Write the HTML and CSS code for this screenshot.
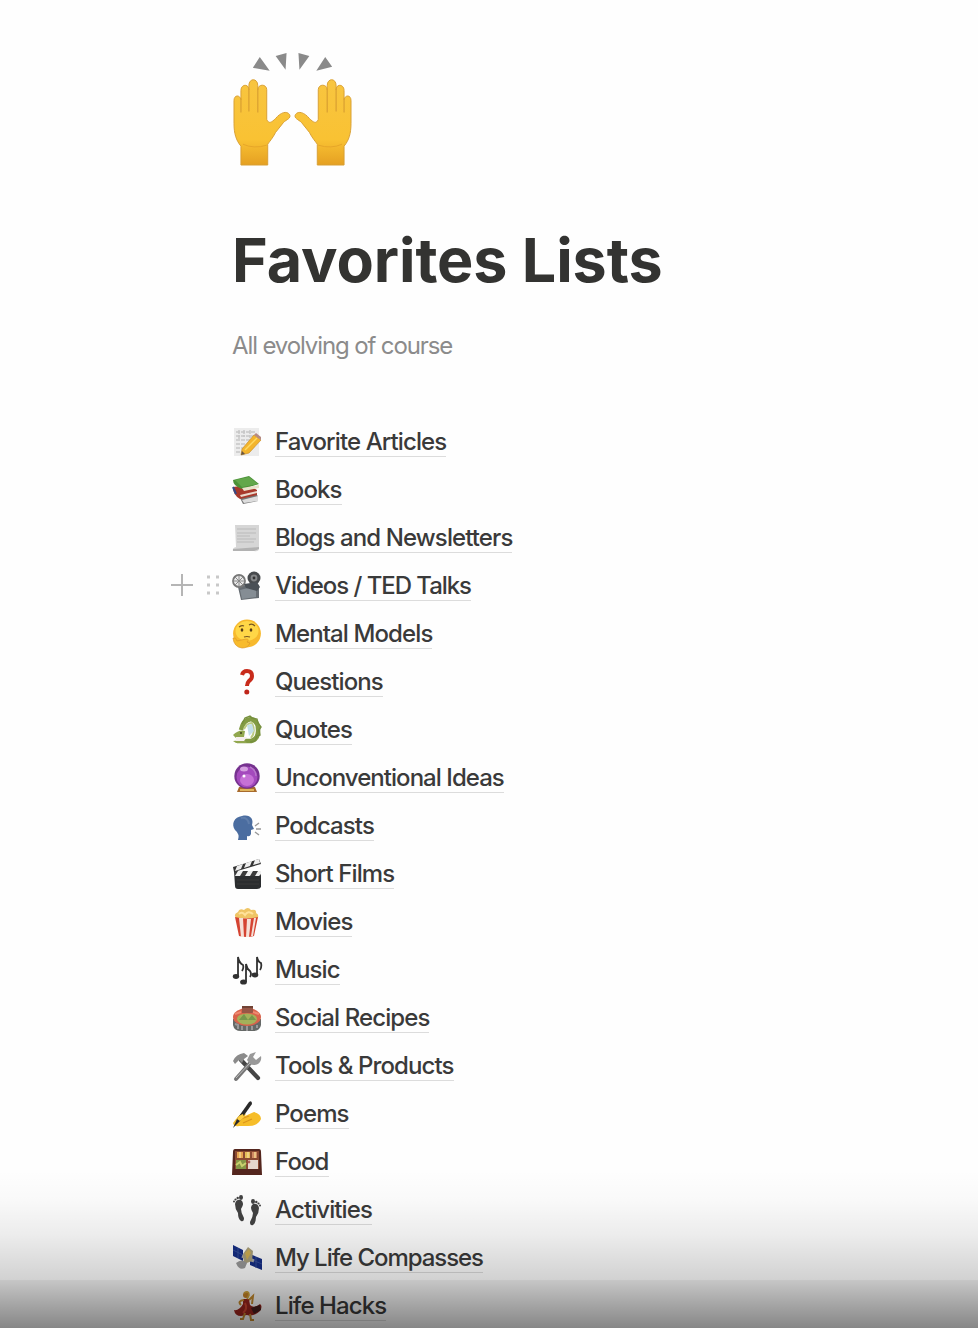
FILE: index.html
```html
<!DOCTYPE html>
<html lang="en">
<head>
<meta charset="utf-8">
<title>Favorites Lists</title>
<link rel="stylesheet" href="styles.css">
</head>
<body>
<main class="page">
<svg class="hero" viewBox="0 0 120 118">
<defs>
<linearGradient id="skin" x1="0" x2="0" y1="0" y2="1"><stop offset="0" stop-color="#f8c540"/><stop offset=".7" stop-color="#f9c233"/><stop offset="1" stop-color="#e5a022"/></linearGradient>
<g id="hand"><path d="M8 116V97C3 91 1 84 1 74V51C1 45 7 45 8 50V41C8 34 16 34 16 40V36C16 28 25 28 25 36V40C25 34 34 34 34 40V70C36 75 39 73 43 69C48 63 54 61 57 65C59 69 54 70 51 73L43 83C40 89 37 92 35 95V116Z" fill="url(#skin)" stroke="#d9a035"/><path d="M8 49V63M16 39V62M25 39V63" fill="none" stroke="#dba232" stroke-width="1.3"/><path d="M10 95Q21 100 34 96" fill="none" stroke="#e6a628"/></g>
</defs>
<g fill="#8a8a8a"><path d="M27 7 20 18 37 21ZM43 6 54 3 53 20ZM66 3 77 6 67 20ZM93 7 100 17 84 21Z"/></g>
<use href="#hand"/><use href="#hand" transform="matrix(-1 0 0 1 120 0)"/>
</svg>
<h1 class="title">Favorites Lists</h1>
<p class="subtitle">All evolving of course</p>
<ul class="list">
<li class="row"><svg class="icon" viewBox="0 0 30 30"><path d="M2 1H27V29H2Z" fill="#ececec"/><path d="M4 5H24M4 9H22M4 13H18M4 17H14M4 21H12M4 25H10M7 3V12M12 3V10M18 3V11" stroke="#c6c6c6" stroke-width="1.4" stroke-dasharray="4 1"/><path d="M10 22 22 8 29 13 17 26 9 28Z" fill="#f3b52c" stroke="#c98e2c" stroke-width=".7"/><path d="M13 23 25 11" stroke="#ffda63" stroke-width="1.5"/><path d="M22 8 24 6 29 10 29 13Z" fill="#b58a83"/><path d="M9 28 10 24 13 27Z" fill="#675545"/></svg><a class="link">Favorite Articles</a></li>
<li class="row"><svg class="icon" viewBox="0 0 30 30"><path d="M6 19 20 16 26 21V26L11 29Z" fill="#777"/><path d="M10 25 26 21V26L12 28Z" fill="#ddd"/><path d="M1 12 16 10 25 15V20L8 24Q1 20 1 12Z" fill="#a8392c"/><path d="M8 20 25 16V18L9 22Z" fill="#ead8cc"/><path d="M1 5 17 1 27 9 10 14Q1 11 1 5Z" fill="#4b9138"/><path d="M3 5 17 2 26 9 10 12Z" fill="#62a74a"/><path d="M10 13 27 10V13L12 16Z" fill="#e7e2c9"/><path d="M1 12 4 19" stroke="#354a87" stroke-width="2"/></svg><a class="link">Books</a></li>
<li class="row"><svg class="icon" viewBox="0 0 30 30"><path d="M3 2H27V25Q27 29 22 28H1Q0 25 4 24Z" fill="#d6d6d6"/><path d="M5 6H24M5 10H24M5 13H18M5 16H24M5 19H22" stroke="#c4c4c4" stroke-width="1.3"/><path d="M1 26 27 24V26L22 28H1Z" fill="#b2b2b2"/></svg><a class="link">Blogs and Newsletters</a></li>
<li class="row"><span class="handles"><svg class="plus" viewBox="0 0 22 22"><path d="M11 0V22M0 11H22" stroke="#b5b5b5" stroke-width="2"/></svg><svg class="drag" viewBox="0 0 14 22"><path d="M1 3H4M10 3H13M1 11H4M10 11H13M1 19H4M10 19H13" stroke="#c8c8c8" stroke-width="3"/></svg></span><svg class="icon" viewBox="0 0 30 30"><path d="M6 16 24 11 27 15V27L9 29Z" fill="#666c72"/><path d="M8 19 24 15V26L10 28Z" fill="#858d94"/><circle cx="7" cy="10" r="6" fill="#e9e9e9" stroke="#777" stroke-width="1.8"/><path d="M7 4V16M1 10H13M3 6 11 14M3 14 11 6" stroke="#888"/><circle cx="22" cy="7" r="6.5" fill="#484b4e"/><circle cx="22" cy="7" r="3.4" fill="#858789"/><circle cx="22" cy="7" r="1.4" fill="#333"/><path d="M12 13 25 11 28 16 25 20 14 17Z" fill="#4a5056"/></svg><a class="link tight">Videos / TED Talks</a></li>
<li class="row"><svg class="icon" viewBox="0 0 30 30"><circle cx="15" cy="14.5" r="13.9" fill="#f7b92d"/><ellipse cx="15" cy="12" rx="11.5" ry="10" fill="#ffd747"/><ellipse cx="10" cy="11" rx="1.3" ry="1.8" fill="#573c16"/><ellipse cx="19" cy="11" rx="1.3" ry="1.8" fill="#573c16"/><path d="M7 8Q10 6 12 7M17 6Q20 4 23 7M12 18Q15 17 18 18" fill="none" stroke="#785620" stroke-width="1.2"/><path d="M1 19Q4 18 5 22L14 20Q18 20 15 23L18 24Q16 29 10 29Q2 28 1 19Z" fill="#f8bb2c" stroke="#dc9826" stroke-width=".7"/></svg><a class="link">Mental Models</a></li>
<li class="row"><svg class="icon" viewBox="0 0 30 30"><path d="M10 8Q11 4 15 4Q20 4 20 9Q20 12 17 14Q15 16 15 19" fill="none" stroke="#c82b1b" stroke-width="4"/><circle cx="14.8" cy="25" r="2.5" fill="#bf261b"/></svg><a class="link">Questions</a></li>
<li class="row"><svg class="icon" viewBox="0 0 30 30"><path d="M9 15Q11 5 19 4Q26 6 26 14Q27 24 19 26H5" fill="none" stroke="#829b43" stroke-width="4.5"/><path d="M10 9 13 3 18 1 20 3 25 4 26 8 29 12 27 15 28 20 25 21 23 26 18 27" fill="none" stroke="#758f3d" stroke-width="1.4"/><path d="M12 14Q15 8 20 8Q24 17 19 23" fill="none" stroke="#bccb83" stroke-width="2"/><path d="M1 20Q7 14 13 16L12 22 4 23ZM1 26 12 25 15 28H4Z" fill="#91a74e"/><path d="M4 22H15L12 26H4Z" fill="#f5eeee"/><path d="M15 10 20 9 22 16 17 21Z" fill="#c4e0e9"/><circle cx="9" cy="18" r="1" fill="#404020"/></svg><a class="link">Quotes</a></li>
<li class="row"><svg class="icon" viewBox="0 0 30 30"><path d="M7 24H23L25 29H5Z" fill="#a86b2d"/><path d="M8 27H22" stroke="#dfb45d" stroke-width="2"/><circle cx="15" cy="13" r="12.7" fill="#76328f"/><circle cx="15" cy="14" r="10.5" fill="#a44abd"/><ellipse cx="15" cy="17" rx="7" ry="6" fill="#c671d6"/><ellipse cx="12" cy="6" rx="4" ry="2.5" fill="#d5a0e0"/><circle cx="12" cy="13" r="1.5" fill="#fff"/><path d="M18 4Q24 7 24 13" fill="none" stroke="#b777c9" stroke-width="1.4"/></svg><a class="link tight-slight">Unconventional Ideas</a></li>
<li class="row"><svg class="icon" viewBox="0 0 30 30"><path d="M10 5C18 3 22 8 20 14L22 18 19 19V23Q18 26 15 25V29H6Q8 23 3 19C-1 13 2 6 10 5Z" fill="#4b6da0"/><path d="M9 7Q16 6 17 13" stroke="#5e7dab" fill="none" stroke-width="2"/><path d="M23 15 27 12M24 18H29M23 21 27 24" stroke="#999" stroke-width="1.4"/></svg><a class="link">Podcasts</a></li>
<li class="row"><svg class="icon" viewBox="0 0 30 30"><path d="M1 8 27 0 29 5 2 13Z" fill="#343434"/><path d="M5 7 11 5 9 10 3 12ZM14 4 20 2 18 7 12 9ZM23 1 27 0 28 4 21 6Z" fill="#eee"/><path d="M2 12H29V28Q28 30 25 30H6Q3 30 3 27Z" fill="#2b2d2f"/><path d="M3 12H29V17H3Z" fill="#3b3b3b"/><path d="M6 12H11L8 17H3ZM16 12H21L18 17H13ZM26 12H29V15L27 17H23Z" fill="#eee"/><path d="M5 21H27M5 25H27" stroke="#3b3b3b"/></svg><a class="link">Short Films</a></li>
<li class="row"><svg class="icon" viewBox="0 0 30 30"><path d="M4 11Q1 7 6 5Q7 1 12 3Q16 -1 19 3Q25 2 24 6Q28 8 25 12Z" fill="#efc565"/><path d="M7 7Q10 4 13 8Q16 3 21 7" fill="none" stroke="#ffe29a" stroke-width="2"/><path d="M3 10Q15 13 26 10L22 29Q15 31 7 29Z" fill="#d54432"/><path d="M7 11H11L12 30H9ZM15 12H19L17 30H14ZM22 11H24L21 29H19Z" fill="#f6e1d8"/></svg><a class="link">Movies</a></li>
<li class="row"><svg class="icon" viewBox="0 0 30 30"><g fill="#313131"><ellipse cx="4" cy="21.5" rx="3.2" ry="2.4"/><ellipse cx="11.5" cy="27" rx="3.4" ry="2.6"/><ellipse cx="23" cy="20" rx="3.3" ry="2.4"/></g><path d="M6 22V2Q7 8 11 10Q12 13 10 16M14 27V9Q15 14 18 16Q20 19 18 22M25 20V2Q26 7 29 8Q30 12 28 15" fill="none" stroke="#313131" stroke-width="1.8"/></svg><a class="link">Music</a></li>
<li class="row"><svg class="icon" viewBox="0 0 30 30"><path d="M1 16H29V22Q28 28 21 28H9Q2 28 1 22Z" fill="#656967"/><ellipse cx="15" cy="14" rx="14" ry="9" fill="#d9634b"/><ellipse cx="15" cy="16" rx="10" ry="5.5" fill="#a3b15a"/><path d="M7 17 12 11 16 17 20 12 24 17Z" fill="#76974b"/><path d="M10 4H21V10H10Z" fill="#985646"/><path d="M10 4H21" stroke="#714335" stroke-width="2"/><path d="M3 21 6 22V26M10 23V27M15 23V28M20 23V27M25 22V25" fill="none" stroke="#999" stroke-width="2"/><path d="M3 11 9 9M21 9 27 11" stroke="#ef8a70" stroke-width="2"/></svg><a class="link">Social Recipes</a></li>
<li class="row"><svg class="icon" viewBox="0 0 30 30"><path d="M9 9 26 27" stroke="#454545" stroke-width="4.2" stroke-linecap="round"/><path d="M1 10Q4 3 12 2L16 5 12 8 10 12 7 9 3 13Z" fill="#8b8b8b"/><path d="M4 28 19 11" stroke="#777" stroke-width="4" stroke-linecap="round"/><path d="M18 13 15 9 18 3 24 1 21 6 24 9 29 5Q30 10 26 13Q22 15 18 13Z" fill="#999"/><path d="M4 27 18 12" stroke="#bbb"/></svg><a class="link">Tools &amp; Products</a></li>
<li class="row"><svg class="icon" viewBox="0 0 30 30"><path d="M1 24Q6 17 10 14Q15 13 13 17L22 13Q29 15 29 20Q26 27 16 27H7Q2 28 1 24Z" fill="#f6bd29"/><path d="M9 20 17 17M11 24 20 20" stroke="#dc961d" stroke-width="1.3"/><path d="M1 29 5 20 17 3Q20 1 20 5L8 22Z" fill="#292929"/><path d="M5 20Q7 16 11 15L12 18 8 22Z" fill="#ffcf42"/></svg><a class="link">Poems</a></li>
<li class="row"><svg class="icon" viewBox="0 0 30 30"><path d="M3 2H27Q29 2 29 5L30 28H0L1 5Q1 2 3 2Z" fill="#54261e"/><path d="M3 4H27V22H3Z" fill="#8b4a32"/><path d="M5 5H11V11H5Z" fill="#e6a452"/><path d="M13 5H18V11H13Z" fill="#e3bd58"/><path d="M20 5H25V11H20Z" fill="#cf8a62"/><path d="M4 13H14V22H4Z" fill="#849747"/><path d="M16 13H26V22H16Z" fill="#e6d7cd"/><path d="M8 5V11M16 5V11M23 5V11" stroke="#f5d790" stroke-width="1.5"/><path d="M4 18 8 15 10 19 14 16" fill="none" stroke="#c9d16e" stroke-width="2"/><circle cx="17" cy="15" r="1.4" fill="#b0625a"/></svg><a class="link">Food</a></li>
<li class="row"><svg class="icon" viewBox="0 0 30 30"><g id="foot" fill="#424242"><path d="M3 9Q4 4 9 5Q13 8 9 14Q9 18 12 23Q12 27 9 26Q6 24 6 18Q3 14 3 9Z"/><ellipse cx="9" cy="2.5" rx="2" ry="2.4"/><circle cx="5.7" cy="3" r="1.2"/><circle cx="3.5" cy="4.5" r="1.1"/><circle cx="2" cy="6.5" r="1"/></g><use href="#foot" transform="matrix(-1 0 0 1 30 4)"/></svg><a class="link">Activities</a></li>
<li class="row"><svg class="icon" viewBox="0 0 30 30"><path d="M1 2 11 7V18L1 13ZM18 11 30 16V27L18 22Z" fill="#152d84"/><path d="M1 7 11 12M6 5V15M18 16 30 21M24 14V25" stroke="#3c559d" stroke-width=".8"/><path d="M10 13 22 18" stroke="#aaa" stroke-width="3"/><path d="M11 11 16 4 21 8 20 18 12 21Z" fill="#aaa07c"/><path d="M13 10 17 6 19 10 15 17Z" fill="#d0af53"/><path d="M4 20Q10 15 15 20L13 25Q7 28 4 20Z" fill="#999"/></svg><a class="link tight">My Life Compasses</a></li>
<li class="row"><svg class="icon" viewBox="0 0 30 30"><path d="M11 8 17 8 18 14Q22 18 28 13Q31 15 28 20Q22 26 15 24L9 25Q3 25 2 19Q7 20 11 13Z" fill="#9d251d"/><path d="M19 17 28 14 29 19 22 23Z" fill="#471d1b"/><circle cx="14" cy="4" r="3" fill="#c98428"/><path d="M12 2Q17 -1 17 4L15 8" fill="none" stroke="#d5a73a" stroke-width="1.7"/><path d="M12 9Q5 10 9 14M17 9 21 5 20 13M13 22 11 28H8M18 23 19 29H22" fill="none" stroke="#c98d2e" stroke-width="2"/><path d="M13 12Q16 18 11 22" fill="none" stroke="#d04730" stroke-width="2"/></svg><a class="link">Life Hacks</a></li>
</ul>
</main>
<div class="shade"></div>
</body>
</html>
```
FILE: styles.css
```css
* { box-sizing: border-box; }
body { margin: 0; background: #fefefe; color: #3a3a3a; font-family: Inter, "Liberation Sans", sans-serif; overflow: hidden; }
.page { height: 1328px; overflow: hidden; padding: 50px 0 0 233px; }
.hero { display: block; width: 119px; height: 117px; }
.title { margin: 56px 0 0 -1px; font-size: 61px; line-height: 74px; font-weight: 700; letter-spacing: -0.08px; color: #333331; white-space: nowrap; }
.subtitle { margin: 34px 0 0 -1px; font-size: 24px; line-height: 30px; letter-spacing: -1.12px; color: #8b8b8b; }
.list { list-style: none; margin: 57px 0 0; padding: 0; }
.row { position: relative; display: flex; align-items: center; height: 48px; }
.icon { width: 30px; height: 30px; margin: 0 13px 0 -1px; flex: none; overflow: visible; }
.link { height: 30px; font-size: 24px; line-height: 30px; font-weight: 500; letter-spacing: -0.9px; border-bottom: 1px solid #dcdcdc; white-space: nowrap; }
.tight { letter-spacing: -1.05px; }
.tight-slight { letter-spacing: -0.96px; }
.handles { position: absolute; left: -62px; top: 12px; display: flex; gap: 13px; }
.plus { width: 22px; height: 22px; }
.drag { width: 14px; height: 22px; }
.shade { position: absolute; left: 0; right: 0; bottom: 0; height: 158px; pointer-events: none; background: linear-gradient(to bottom, rgba(0,0,0,0) 0, rgba(0,0,0,.02) 30px, rgba(0,0,0,.07) 65px, rgba(0,0,0,.175) 110px, rgba(0,0,0,.22) 110px, rgba(0,0,0,.34) 133px, rgba(0,0,0,.47) 158px); }
```
